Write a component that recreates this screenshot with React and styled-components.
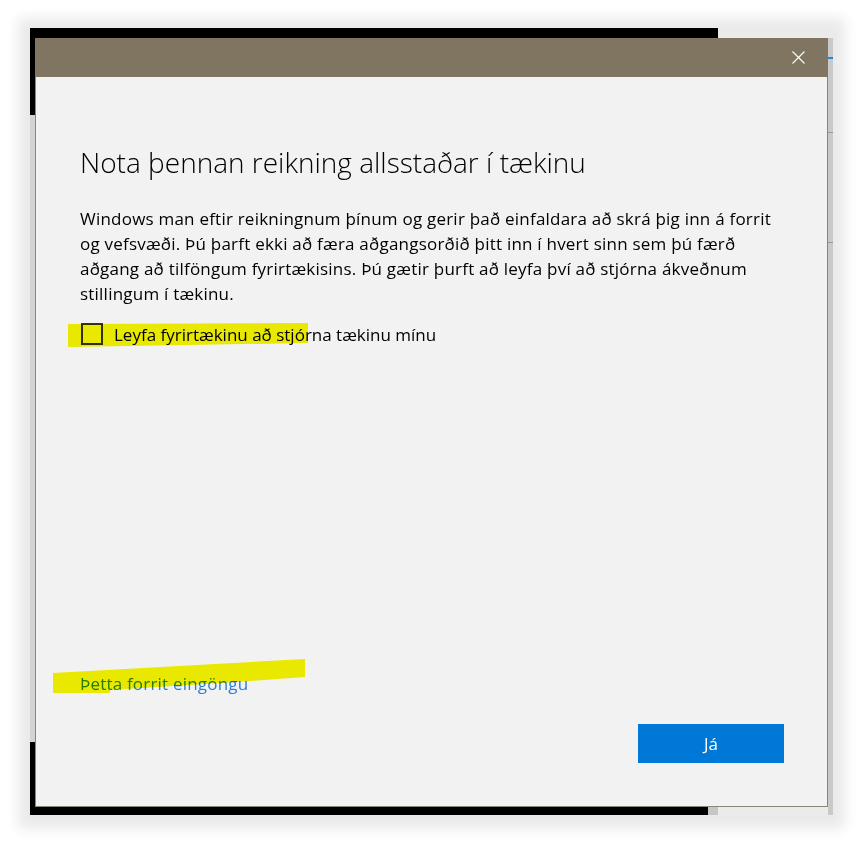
import React from "react";
import styled, { createGlobalStyle } from "styled-components";

const GlobalStyle = createGlobalStyle`
  html, body {
    margin: 0;
    padding: 0;
    background: #ffffff;
  }
  body {
    font-family: "Open Sans", "Noto Sans", "Liberation Sans", sans-serif;
    width: 861px;
    height: 859px;
    overflow: hidden;
  }
`;

const Frame = styled.div`
  box-sizing: border-box;
  width: 803px;
  height: 787px;
  margin: 28px 0 0 30px;
  padding: 10px 5px 8px 5px;
  display: flex;
  flex-direction: column;
  box-shadow: 0 2px 12px 12px rgba(0, 0, 0, 0.085);
  background:
    linear-gradient(#9a9a9a, #9a9a9a) right 0 top 104px / 5px 1px no-repeat,
    linear-gradient(#9a9a9a, #9a9a9a) right 0 top 214px / 5px 1px no-repeat,
    linear-gradient(#1a8ad8, #1a8ad8) right 0 top 29px / 5px 2px no-repeat,
    linear-gradient(#c9c9c9, #c9c9c9) right 0 top 10px / 5px 100% no-repeat,
    linear-gradient(#ebebeb, #ebebeb) right 0 top 0 / 115px 100% no-repeat,
    linear-gradient(#c6c6c6, #c6c6c6) left 678px bottom 0 / 10px 10px no-repeat,
    linear-gradient(#d3d3d3, #d3d3d3) left 0 top 87px / 5px 627px no-repeat,
    #000000;
`;

const Dialog = styled.div`
  flex: 1;
  display: flex;
  flex-direction: column;
  min-height: 0;
`;

const TitleBar = styled.div`
  height: 39px;
  flex-shrink: 0;
  background: #7f7561;
  display: flex;
  align-items: center;
  justify-content: flex-end;
  padding-right: 23px;
`;

const CloseButton = styled.button`
  width: 14px;
  height: 14px;
  padding: 0;
  border: none;
  background: transparent;
  display: flex;
  align-items: center;
  justify-content: center;
  cursor: pointer;
`;

const Body = styled.div`
  position: relative;
  flex: 1;
  display: flex;
  flex-direction: column;
  background: #f2f2f2;
  border: 1px solid #8b8574;
  border-top: none;
  padding: 66px 43px 43px 44px;
`;

const Title = styled.h1`
  margin: 0;
  font-weight: 300;
  font-size: 28px;
  line-height: 38px;
  color: #000;
`;

const Paragraph = styled.p`
  margin: 25px 0 0 0;
  font-size: 17px;
  line-height: 25px;
  letter-spacing: 0.22px;
  color: #000;
  white-space: nowrap;
`;

const CheckRow = styled.label`
  margin-top: 16px;
  display: flex;
  align-items: center;
  gap: 11px;
  height: 24px;
  font-size: 17px;
  color: #000;
  cursor: pointer;
`;

const Box = styled.span`
  box-sizing: border-box;
  width: 22px;
  height: 22px;
  margin-left: 1px;
  border: 2px solid #333;
  background: ${(props) => (props.checked ? "#0078d7" : "transparent")};
`;

const Spacer = styled.div`
  flex: 1;
`;

const Link = styled.a`
  font-size: 17px;
  line-height: 22px;
  letter-spacing: 0.2px;
  color: #2a7fd9;
  text-decoration: none;
  align-self: flex-start;
  cursor: pointer;
`;

const ButtonRow = styled.div`
  margin-top: 29px;
  display: flex;
  justify-content: flex-end;
`;

const PrimaryButton = styled.button`
  width: 146px;
  height: 39px;
  border: none;
  background: #0078d7;
  color: #fff;
  font-family: "Open Sans", "Noto Sans", sans-serif;
  font-size: 17px;
  cursor: pointer;
`;

const Marker = styled.svg`
  position: absolute;
  left: 0;
  top: 0;
  width: 100%;
  height: 100%;
  pointer-events: none;
  mix-blend-mode: multiply;
`;

export default function App() {
  return (
    <>
      <GlobalStyle />
      <Frame>
        <Dialog>
          <TitleBar>
            <CloseButton aria-label="Loka">
              <svg width="13" height="13" viewBox="0 0 13 13">
                <path d="M0.5 0.5L12.5 12.5M12.5 0.5L0.5 12.5" stroke="#fff" strokeWidth="1.1" />
              </svg>
            </CloseButton>
          </TitleBar>
          <Body>
            <Title>Nota þennan reikning allsstaðar í tækinu</Title>
            <Paragraph>
              Windows man eftir reikningnum þínum og gerir það einfaldara að skrá þig inn á forrit
              <br />
              og vefsvæði. Þú þarft ekki að færa aðgangsorðið þitt inn í hvert sinn sem þú færð
              <br />
              aðgang að tilföngum fyrirtækisins. Þú gætir þurft að leyfa því að stjórna ákveðnum
              <br />
              stillingum í tækinu.
            </Paragraph>
            <CheckRow>
              <Box />
              Leyfa fyrirtækinu að stjórna tækinu mínu
            </CheckRow>
            <Spacer />
            <Link>Þetta forrit eingöngu</Link>
            <ButtonRow>
              <PrimaryButton>Já</PrimaryButton>
            </ButtonRow>
            <Marker>
              <polygon points="32,247 272,246 272,266 150,268 32,270" fill="#f5f500" />
              <polygon points="17,596 269,582 269,600 200,605 74,613 74,616 17,616" fill="#f5f500" />
            </Marker>
          </Body>
        </Dialog>
      </Frame>
    </>
  );
}
